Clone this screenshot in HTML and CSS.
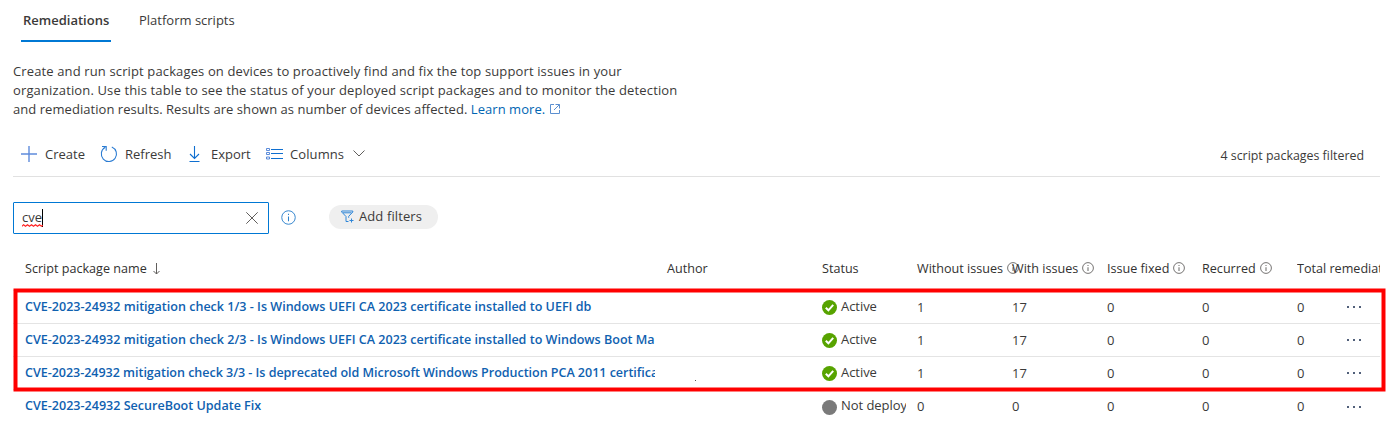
FILE: index.html
```html
<!DOCTYPE html>
<html lang="en">
<head>
<meta charset="utf-8">
<title>Remediations</title>
<link rel="stylesheet" href="styles.css">
</head>
<body>
<svg class="defs" width="0" height="0">
  <symbol id="info" viewBox="0 0 16 16"><circle cx="8" cy="8" r="7.2" fill="none" stroke="currentColor"/><path d="M8 7v5M8 4v1.3" fill="none" stroke="currentColor" stroke-width="1.1"/></symbol>
  <symbol id="ok" viewBox="0 0 15 15"><circle cx="7.5" cy="7.5" r="7.5" fill="#57a300"/><path d="M3.8 7.7l2.6 2.6 4.8-5.5" fill="none" stroke="#fff" stroke-width="2"/></symbol>
  <symbol id="off" viewBox="0 0 15 15"><circle cx="7.5" cy="7.5" r="7.5" fill="#7a7a7a"/></symbol>
  <symbol id="more" viewBox="0 0 16 4"><path d="M1 1h2v2H1zM7 1h2v2H7zM13 1h2v2h-2z" fill="#51607a"/></symbol>
</svg>
<nav class="tabs">
  <a class="tab active"><span>Remediations</span></a>
  <a class="tab"><span>Platform scripts</span></a>
</nav>
<p class="intro">
  <span class="line l1">Create and run script packages on devices to proactively find and fix the top support issues in your</span>
  <span class="line l2">organization. Use this table to see the status of your deployed script packages and to monitor the detection</span>
  <span class="line l3">and remediation results. Results are shown as number of devices affected. <a class="link">Learn more.</a><svg class="ext" width="12" height="12" viewBox="0 0 12 12"><path d="M5 1.5H1.5v9h9V7M6.500 1.500h4v4M10.500 1.500L5 7" fill="none" stroke="#5b8fd0"/></svg></span>
</p>
<div class="toolbar">
  <button class="cmd create"><svg width="16" height="16" viewBox="0 0 16 16"><path d="M0 8h16M8 0v16" fill="none" stroke="#5f8cdc" stroke-width="1.4"/></svg><span>Create</span></button>
  <button class="cmd refresh"><svg width="18" height="18" viewBox="0 0 18 18"><path d="M11.800 1.900A7.600 7.600 0 1 1 5.200 2.300M2 1.500h4.200v4.300" fill="none" stroke="#2b7cd3" stroke-width="1.1"/></svg><span>Refresh</span></button>
  <button class="cmd export"><svg width="12" height="16" viewBox="0 0 12 16"><path d="M5.500 0v12M1 8l4.500 4.500L10 8M.500 15.500h10" fill="none" stroke="#0f6fd0" stroke-width="1.1"/></svg><span>Export</span></button>
  <button class="cmd columns"><svg width="17" height="12" viewBox="0 0 17 12"><path d="M5 1.500h12M5 5.500h12M5 10.500h12" fill="none" stroke="#0f6fd0" stroke-width="1.100"/><path d="M.5.5h3v2h-3zM.5 4.500h3v2h-3zM.5 9h3v2h-3z" fill="none" stroke="#4a7fd6" stroke-width=".9"/></svg><span>Columns</span><svg class="chev" width="12" height="7" viewBox="0 0 12 7"><path d="M.5.5L6 6 11.500.5" fill="none" stroke="#605e5c"/></svg></button>
  <span class="count">4 script packages filtered</span>
</div>
<div class="filters">
  <div class="search"><span class="query">cve<svg class="spell" width="21" height="3" viewBox="0 0 21 3"><path d="M0 2.300l1.500-1.600 2 1.600 2-1.600 2 1.600 2-1.600 2 1.600 2-1.600 2 1.600 2-1.600 2 1.600 1.500-1.200" fill="none" stroke="#f22" stroke-width="1.100"/></svg></span><i class="caret"></i>
    <svg class="clear" width="12" height="12" viewBox="0 0 12 12"><path d="M.3.3l11.400 11.400M11.700.3L.3 11.700" fill="none" stroke="#605e5c"/></svg></div>
  <svg class="help" width="15" height="15"><use href="#info"/></svg>
  <button class="pill"><svg width="13" height="13" viewBox="0 0 13 13"><path d="M7.500 11.500H5V6.500L.7 2V1h11.100v1L7.700 6.300v1.500M2 2.800h8.500M10.500 8.500v4M8.500 10.500h4" fill="none" stroke="#2e86d8"/></svg><span>Add filters</span></button>
</div>
<div class="grid">
  <div class="row head">
    <div class="c-name"><span>Script package name</span><svg class="sort" width="7" height="12" viewBox="0 0 7 12"><path d="M3.500 0v11M.5 8l3 3 3-3" fill="none" stroke="#605e5c"/></svg></div>
    <div><span>Author</span></div>
    <div><span>Status</span></div>
    <div><span>Without issues</span><svg class="i" width="12" height="12"><use href="#info"/></svg></div>
    <div><span>With issues</span><svg class="i" width="12" height="12"><use href="#info"/></svg></div>
    <div><span>Issue fixed</span><svg class="i" width="12" height="12"><use href="#info"/></svg></div>
    <div><span>Recurred</span><svg class="i" width="12" height="12"><use href="#info"/></svg></div>
    <div class="c-total"><span>Total remediat</span></div>
  </div>
  <div class="row">
    <div class="c-name"><a>CVE-2023-24932 mitigation check 1/3 - Is Windows UEFI CA 2023 certificate installed to UEFI db</a></div><div></div>
    <div class="c-status"><svg width="15" height="15"><use href="#ok"/></svg><span>Active</span></div>
    <div>1</div><div>17</div><div>0</div><div>0</div><div>0</div>
    <div class="c-more"><svg width="16" height="4"><use href="#more"/></svg></div>
  </div>
  <div class="row">
    <div class="c-name"><a>CVE-2023-24932 mitigation check 2/3 - Is Windows UEFI CA 2023 certificate installed to Windows Boot Ma</a></div><div></div>
    <div class="c-status"><svg width="15" height="15"><use href="#ok"/></svg><span>Active</span></div>
    <div>1</div><div>17</div><div>0</div><div>0</div><div>0</div>
    <div class="c-more"><svg width="16" height="4"><use href="#more"/></svg></div>
  </div>
  <div class="row">
    <div class="c-name"><a class="tight">CVE-2023-24932 mitigation check 3/3 - Is deprecated old Microsoft Windows Production PCA 2011 certifica</a></div><div><i class="speck"></i></div>
    <div class="c-status"><svg width="15" height="15"><use href="#ok"/></svg><span>Active</span></div>
    <div>1</div><div>17</div><div>0</div><div>0</div><div>0</div>
    <div class="c-more"><svg width="16" height="4"><use href="#more"/></svg></div>
  </div>
  <div class="row last">
    <div class="c-name"><a>CVE-2023-24932 SecureBoot Update Fix</a></div><div></div>
    <div class="c-status"><svg width="15" height="15"><use href="#off"/></svg><span class="dep">Not deploy</span></div>
    <div>0</div><div>0</div><div>0</div><div>0</div><div>0</div>
    <div class="c-more"><svg width="16" height="4"><use href="#more"/></svg></div>
  </div>
  <svg class="highlight" width="1373" height="104"><rect x="2.500" y="2.500" width="1368" height="99" fill="none" stroke="#f00" stroke-width="4"/></svg>
</div>
</body>
</html>
```
FILE: styles.css
```css
* { box-sizing: border-box; }
body { margin: 0; width: 1387px; height: 422px; overflow: hidden; background: #fff; color: #3b3a39; font: 13px/19px "Open Sans", "Noto Sans", sans-serif; }
svg { display: block; flex: none; }
.defs { position: absolute; }
button { font: inherit; color: inherit; border: 0; padding: 0; background: none; }
span, a { white-space: nowrap; }

.tabs { display: flex; gap: 16px; height: 42px; padding-left: 21px; }
.tab { height: 42px; padding: 11px 2px 0; width: 90px; }
.tab + .tab { padding-left: 12px; width: 120px; }
.tab.active { font-weight: 600; border-bottom: 2px solid #0078d4; }

.intro { margin: 0; padding: 20px 0 0 13px; }
.line { display: flex; height: 19px; white-space: pre; }
.l1 { letter-spacing: .13px; }
.l2 { letter-spacing: .143px; }
.l3 { letter-spacing: .053px; }
.link { color: #0065b3; }
.ext { margin: 3px 0 0 4px; }

.toolbar { display: flex; align-items: center; margin-left: 13px; width: 1367px; height: 58px; padding: 12px 16px 0 8px; border-bottom: 1px solid #e1e1e1; }
.cmd { display: flex; align-items: center; }
.cmd span { margin-top: 2px; }
.create { width: 79px; gap: 8px; }
.refresh { width: 89px; gap: 7px; }
.export { width: 77px; gap: 10px; }
.columns { gap: 7px; letter-spacing: .1px; }
.chev { margin-left: 2px; }
.count { margin: 4px 0 0 auto; font-size: 12.4px; }

.filters { display: flex; align-items: center; height: 69px; padding: 12px 0 0 13px; }
.search { display: flex; align-items: center; width: 256px; height: 32px; border: 1px solid #0078d4; border-radius: 1px; padding: 0 10px 0 8px; }
.query { position: relative; }
.spell { position: absolute; left: 0; bottom: 0; }
.caret { width: 1px; height: 18px; background: #000; }
.clear { margin-left: auto; }
.help { margin-left: 12px; color: #2b80cc; }
.pill { display: flex; align-items: center; gap: 5px; width: 109px; height: 24px; margin: -2px 0 0 33px; padding-left: 12px; border-radius: 12px; background: #efefef; letter-spacing: .1px; }

.grid { position: relative; }
.row { display: grid; grid-template-columns: 642px 155px 95px 95px 95px 95px 95px 44px auto; margin-left: 13px; padding-left: 12px; width: 1367px; height: 33px; border-bottom: 1px solid #e4e4e4; }
.row > div { display: flex; align-items: center; min-width: 0; }
.row.head { height: 45px; font-size: 12.6px; font-weight: 500; color: #323130; }
.row.last { border: 0; }
.row .c-name { width: 630px; overflow: hidden; }
.c-name a { margin-top: -2px; font-size: 12.55px; font-weight: 580; color: #0f61b0; }
.c-name .tight { letter-spacing: -.04px; }
.sort { margin: 2px 0 0 6px; }
.i { margin-left: 4px; margin-top: -1px; color: #484644; }
.head .c-total { grid-column: 8 / 10; overflow: hidden; }
.row .c-status { gap: 4px; width: 84px; overflow: hidden; }
.c-status svg { margin-top: 1px; }
.c-status span { margin-top: -2px; letter-spacing: -.05px; }
.row .c-more { padding-left: 5px; }
.speck { width: 1px; height: 1px; margin: 14px 0 0 28px; background: #555; }
.highlight { position: absolute; left: 13px; top: 42px; }
```
